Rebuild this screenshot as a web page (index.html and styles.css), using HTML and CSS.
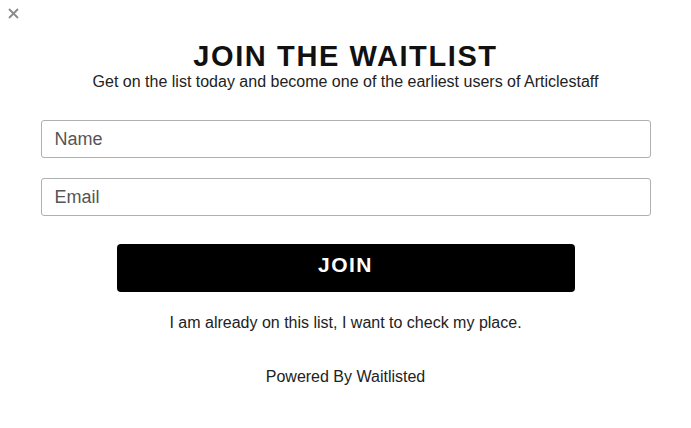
FILE: index.html
```html
<!DOCTYPE html>
<html lang="en">
<head>
    <meta charset="UTF-8">
    <meta name="viewport" content="width=device-width, initial-scale=1.0">
    <title>Join the Waitlist</title>
    <link rel="stylesheet" href="styles.css">
</head>
<body>

<div class="modal">
    <button class="close-btn" aria-label="Close">
        <svg width="11" height="11" viewBox="0 0 11 11">
            <path d="M1 1 L10 10 M10 1 L1 10" stroke="#8a8a8a" stroke-width="1.8" fill="none"/>
        </svg>
    </button>

    <div class="modal-header">
        <h1>JOIN THE WAITLIST</h1>
        <p>Get on the list today and become one of the earliest users of Articlestaff</p>
    </div>

    <form class="signup-form">
        <input type="text" class="field" placeholder="Name">
        <input type="email" class="field" placeholder="Email">
        <button type="button" class="join-btn">JOIN</button>
    </form>

    <p class="check-place">I am already on this list, I want to check my place.</p>
    <p class="powered">Powered By Waitlisted</p>
</div>

</body>
</html>
```

FILE: styles.css
```css
body {
    font-family: 'Liberation Sans', Arial, sans-serif;
    background-color: white;
    color: #222;
    margin: 0;
    padding: 0;
}

.modal {
    position: relative;
    width: 691px;
    padding: 40px 40px 0;
    box-sizing: border-box;
}

.close-btn {
    position: absolute;
    top: 8px;
    left: 8px;
    padding: 0;
    border: none;
    background: none;
    line-height: 0;
    cursor: pointer;
}

.modal-header {
    text-align: center;
}

.modal-header h1 {
    margin: 0;
    font-size: 29px;
    font-weight: bold;
    letter-spacing: 1.6px;
    color: #111;
    line-height: 32px;
}

.modal-header p {
    margin: 0;
    font-size: 16px;
    line-height: 20px;
    color: #222;
}

.signup-form {
    display: flex;
    flex-direction: column;
    align-items: center;
    margin-top: 28px;
    gap: 20px;
}

.field {
    width: 610px;
    height: 38px;
    box-sizing: border-box;
    border: 1px solid #b0b0b0;
    border-radius: 3px;
    padding: 0 13px;
    font-family: inherit;
    font-size: 18px;
    color: #333;
}

.field::placeholder {
    color: #555;
}

.join-btn {
    width: 458px;
    height: 48px;
    margin-top: 8px;
    padding: 0 0 6px;
    border: none;
    border-radius: 4px;
    background-color: #000;
    color: #fff;
    font-family: inherit;
    font-size: 21px;
    font-weight: bold;
    letter-spacing: 1.5px;
    cursor: pointer;
}

.check-place {
    margin: 21px 0 0;
    text-align: center;
    font-size: 16px;
    line-height: 20px;
    color: #222;
}

.powered {
    margin: 34px 0 0;
    text-align: center;
    font-size: 16px;
    line-height: 20px;
    color: #222;
}
```
